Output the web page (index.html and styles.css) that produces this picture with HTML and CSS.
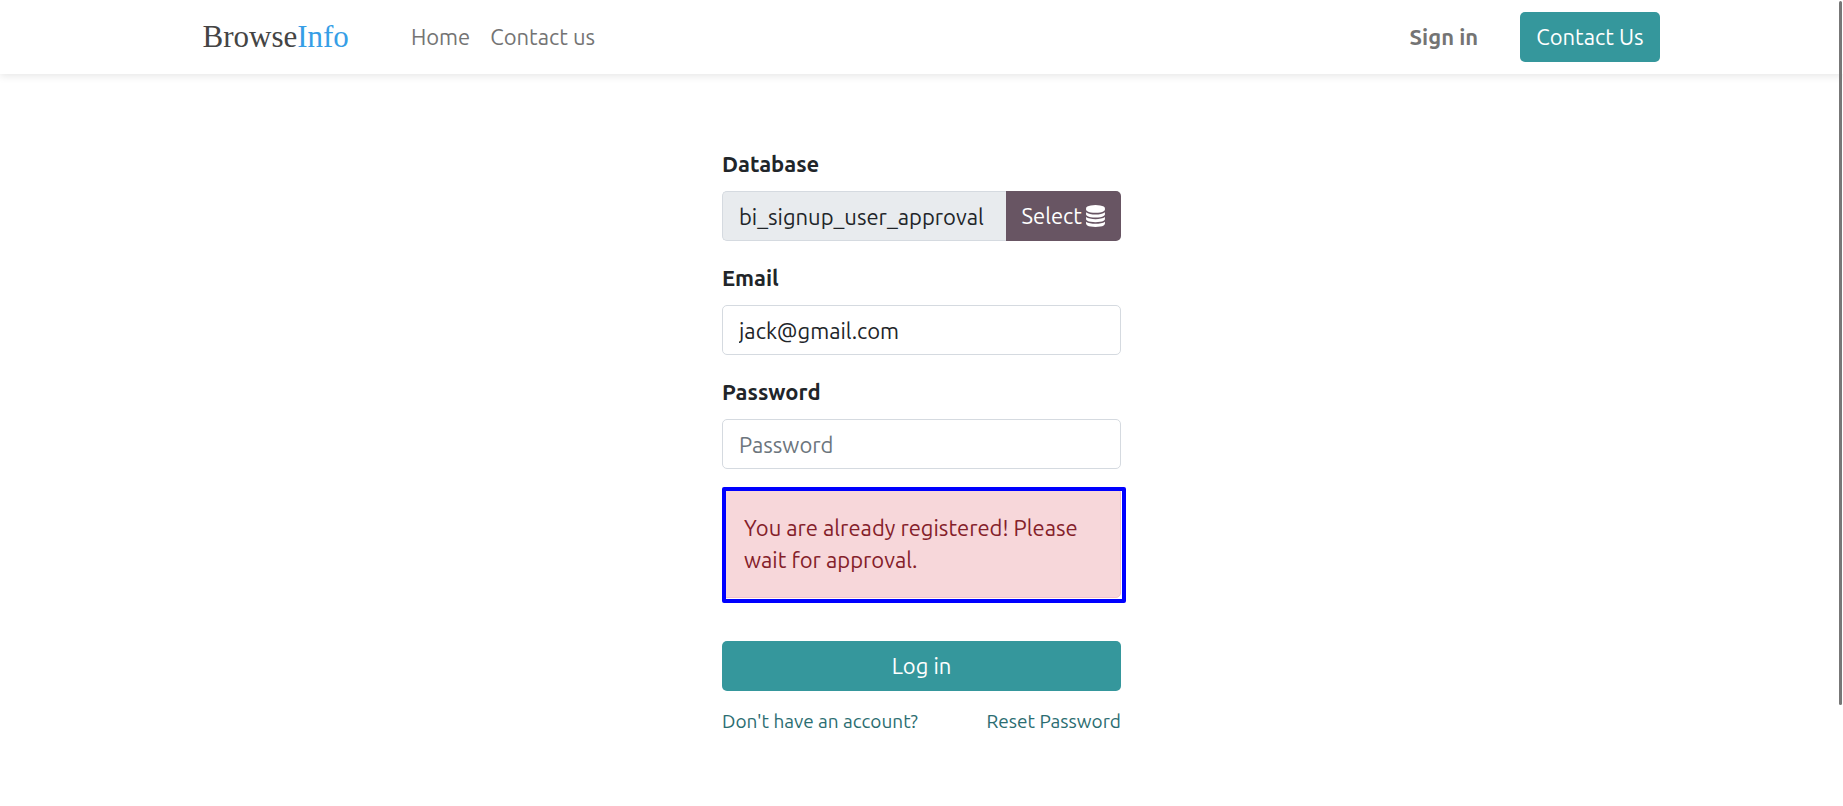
FILE: index.html
```html
<!DOCTYPE html>
<html lang="en">
<head>
<meta charset="utf-8">
<meta name="viewport" content="width=device-width, initial-scale=1">
<title>Login | BrowseInfo</title>
<link rel="stylesheet" href="styles.css">
</head>
<body>
<header class="site-header">
  <div class="container">
    <a class="brand" href="#">Browse<span class="brand-accent">Info</span></a>
    <nav class="main-nav">
      <a href="#">Home</a>
      <a href="#">Contact us</a>
    </nav>
    <a class="sign-in" href="#">Sign in</a>
    <a class="btn btn-primary" href="#">Contact Us</a>
  </div>
</header>
<main>
  <form class="login-form">
    <div class="field">
      <label for="db">Database</label>
      <div class="input-group">
        <input class="control" id="db" type="text" value="bi_signup_user_approval" readonly>
        <button class="btn btn-secondary" type="button">Select
          <svg class="icon" viewBox="0 0 1536 1792" aria-hidden="true"><path fill="currentColor" d="M768 768q237 0 443-43t325-127v170q0 69-103 128t-280 93.500-385 34.500-385-34.500-280-93.500-103-128v-170q119 84 325 127t443 43zm0 768q237 0 443-43t325-127v170q0 69-103 128t-280 93.500-385 34.500-385-34.500-280-93.500-103-128v-170q119 84 325 127t443 43zm0-384q237 0 443-43t325-127v170q0 69-103 128t-280 93.500-385 34.500-385-34.500-280-93.500-103-128v-170q119 84 325 127t443 43zm0-1152q208 0 385 34.500t280 93.500 103 128v128q0 69-103 128t-280 93.500-385 34.500-385-34.500-280-93.500-103-128v-128q0-69 103-128t280-93.500 385-34.500z"/></svg>
        </button>
      </div>
    </div>
    <div class="field">
      <label for="email">Email</label>
      <input class="control" id="email" type="text" value="jack@gmail.com">
    </div>
    <div class="field">
      <label for="password">Password</label>
      <input class="control" id="password" type="password" placeholder="Password">
    </div>
    <p class="alert" role="alert">You are already registered! Please wait for approval.</p>
    <button class="btn btn-primary btn-block" type="submit">Log in</button>
    <div class="form-links">
      <a href="#">Don't have an account?</a>
      <a href="#">Reset Password</a>
    </div>
  </form>
</main>
<div class="scroll-thumb"></div>
</body>
</html>
```
FILE: styles.css
```css
* {
  box-sizing: border-box;
}

body {
  margin: 0;
  background: #fff;
  color: #212529;
  font-family: Ubuntu, "Noto Sans", sans-serif;
  font-size: 22px;
  line-height: 32px;
}

a {
  color: #2b6d71;
  text-decoration: none;
}

.site-header {
  padding: 12px 0;
  box-shadow: 0 2px 8px rgba(0, 0, 0, 0.1);
}

.container {
  display: flex;
  align-items: center;
  max-width: 1476px;
  margin: 0 auto;
}

.brand {
  margin: 0 62px 0 19px;
  color: #444;
  font-family: "Liberation Serif", serif;
  font-size: 31px;
}

.brand-accent {
  color: #369ee6;
}

.main-nav {
  display: flex;
  flex: 1;
  gap: 20px;
}

.main-nav a,
.sign-in {
  color: #747474;
}

.sign-in {
  margin-right: 42px;
  font-weight: 700;
}

.btn {
  height: 50px;
  padding: 9px 16px;
  border: 0;
  border-radius: 5px;
  color: #fff;
  font: inherit;
  white-space: nowrap;
}

.btn-primary {
  background: #35979c;
}

.btn-secondary {
  display: flex;
  align-items: center;
  gap: 4px;
  padding: 0 16px;
  border-radius: 0 5px 5px 0;
  background: #685563;
}

.btn-block {
  width: 100%;
}

.icon {
  width: 19px;
  height: 22px;
}

.login-form {
  max-width: 399px;
  margin: 0 auto;
  padding: 74px 0 60px;
}

.field + .field {
  margin-top: 21px;
}

label {
  display: block;
  margin-bottom: 11px;
  font-weight: 700;
}

.control {
  display: block;
  width: 100%;
  height: 50px;
  padding: 0 16px;
  border: 1px solid #d5dae0;
  border-radius: 5px;
  background: #fff;
  color: #212529;
  font: inherit;
}

.control::placeholder {
  color: #6c757d;
  opacity: 1;
}

.control:read-only {
  background: #e8ebee;
}

.input-group {
  display: flex;
}

.input-group .control {
  flex: 1;
  min-width: 0;
  border-right: 0;
  border-radius: 5px 0 0 5px;
}

.alert {
  position: relative;
  margin: 19px 0 43px;
  padding: 23px 21px 21px;
  border: 1px solid #f5c2c7;
  border-radius: 5px;
  background: #f7d7da;
  color: #842029;
}

.alert::after {
  content: "";
  position: absolute;
  inset: -2px -6px -6px -1px;
  border: 4px solid #00f;
  border-radius: 2px;
}

.form-links {
  display: flex;
  justify-content: space-between;
  margin-top: 14px;
  font-size: 19px;
}

.scroll-thumb {
  position: fixed;
  top: 1px;
  right: 1px;
  width: 3px;
  height: 704px;
  border-radius: 2px;
  background: #777;
}
```
